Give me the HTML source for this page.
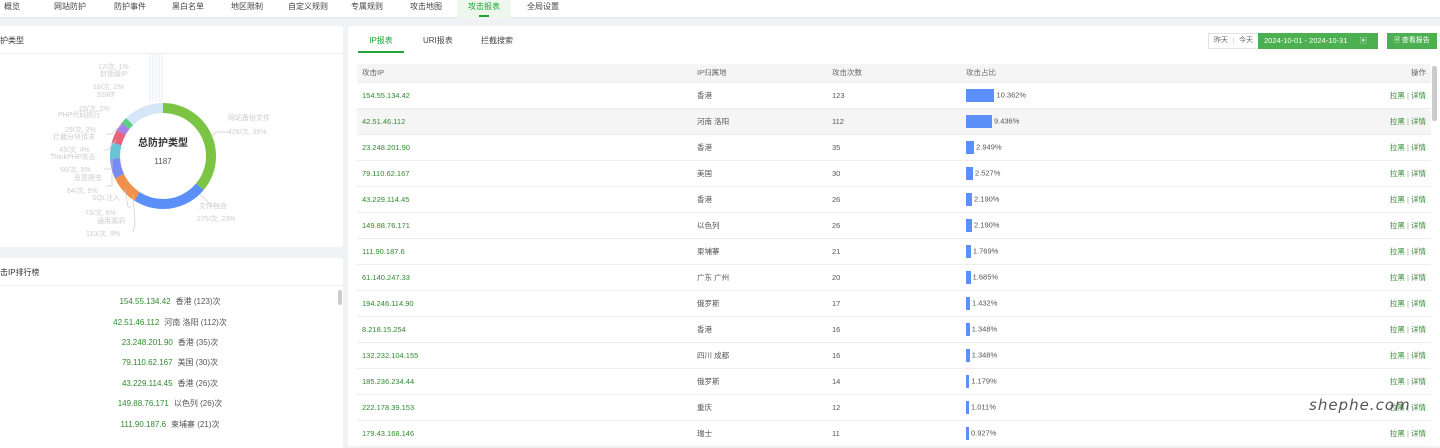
<!DOCTYPE html>
<html><head><meta charset="utf-8"><style>
*{margin:0;padding:0;box-sizing:border-box}
body{width:1440px;height:441px;overflow:hidden;background:#f0f2f5;font-family:"Liberation Sans","Noto Sans CJK SC",sans-serif;font-size:8px;color:#555;position:relative}
.nav{position:absolute;left:0;top:0;width:1440px;height:18px;background:#fff;border-bottom:1px solid #e6e6e6}
.nav span{position:absolute;top:0;line-height:14px;font-size:8px;color:#444}
.nav .act{background:#eef7ec;color:#20a53a;padding:0 11px;height:18px}
.nav .act:after{content:"";position:absolute;left:50%;margin-left:-5px;bottom:1px;width:10px;height:2px;background:#20a53a}
.card{position:absolute;background:#fff;border-radius:3px}
.t{position:absolute;font-size:8px;color:#333}
table{border-collapse:collapse;position:absolute;left:357px;top:64px;width:1074px}
td{height:26px;border-bottom:1px solid #eee;font-size:7.5px;color:#555;padding:0}
tr.h td{height:18px;background:#f5f5f5;color:#666}
tr.g td{background:#f5f5f5}
td.ip{color:#2f8a2f;padding-left:5px;width:340px}
td.loc{width:135px}td.cnt{width:134px}
td.op{text-align:right;padding-right:5px;color:#2f8a2f}
.bar{display:inline-block;height:13px;background:#5b8ff9;vertical-align:middle;margin-right:2px}
.rk{position:absolute;left:0;width:340px;text-align:center;font-size:8px;color:#555}
.rk b{font-weight:normal;color:#2f8a2f;margin-right:5px}
</style></head><body>
<div class="nav">
<span style="left:4px">概览</span><span style="left:54px">网站防护</span><span style="left:114px">防护事件</span><span style="left:172px">黑白名单</span><span style="left:231px">地区限制</span><span style="left:288px">自定义规则</span><span style="left:351px">专属规则</span><span style="left:410px">攻击地图</span><span class="act" style="left:457px">攻击报表</span><span style="left:527px">全局设置</span>
</div>
<div class="card" style="left:-4px;top:26px;width:347px;height:221px"></div>
<div class="t" style="left:0;top:35px">护类型</div>
<div style="position:absolute;left:0;top:53px;width:343px;height:1px;background:#eee"></div>
<svg style="position:absolute;left:0;top:54px" width="343" height="193">
<g fill="none" stroke-width="10" transform="rotate(-90 163 102)">
<circle cx="163" cy="102" r="48" stroke="#d5e6f8" />
<circle cx="163" cy="102" r="48" stroke="#7cc444" stroke-dasharray="108.6 400" stroke-dashoffset="0"/>
<circle cx="163" cy="102" r="48" stroke="#5b8ff9" stroke-dasharray="69.4 400" stroke-dashoffset="-108.6"/>
<circle cx="163" cy="102" r="48" stroke="#f0904a" stroke-dasharray="27.1 400" stroke-dashoffset="-178"/>
<circle cx="163" cy="102" r="48" stroke="#7b8cf0" stroke-dasharray="18.1 400" stroke-dashoffset="-205.1"/>
<circle cx="163" cy="102" r="48" stroke="#69c3d6" stroke-dasharray="15 400" stroke-dashoffset="-223.2"/>
<circle cx="163" cy="102" r="48" stroke="#e8627a" stroke-dasharray="12 400" stroke-dashoffset="-238.2"/>
<circle cx="163" cy="102" r="48" stroke="#a781e8" stroke-dasharray="8 400" stroke-dashoffset="-250.2"/>
<circle cx="163" cy="102" r="48" stroke="#5ccf84" stroke-dasharray="6 400" stroke-dashoffset="-258.2"/>
</g>
<g stroke="#dfe6f0" stroke-width="0.8" fill="none"><path d="M150 48V0M153 48V0M156 48V0M159 48V0M162 48V0"/></g>
<g stroke="#ccc" stroke-width="0.7" fill="none"><path d="M212 82L216 78H228M200 140L212 152H220M133 140L135 170L133 178M125 135L128 153H131M112 118V132H106M112 104V115H104M116 86L108 96H104M122 70L112 80H106"/></g>
<text x="163" y="92" text-anchor="middle" font-size="10" font-weight="bold" fill="#333">总防护类型</text>
<text x="163" y="110" text-anchor="middle" font-size="8" fill="#555">1187</text>
<g font-size="7" fill="#ccc">
<text x="228" y="66">网站备份文件</text><text x="228" y="80">428/次, 36%</text>
<text x="199" y="154">文件包含</text><text x="197" y="167">275/次, 23%</text>
<text x="79" y="57">23/次, 2%</text><text x="58" y="63">PHP代码执行</text>
<text x="65" y="78">29/次, 2%</text><text x="53" y="85">拦截分块请求</text>
<text x="59" y="98">43/次, 4%</text><text x="50" y="105">ThinkPHP攻击</text>
<text x="60" y="118">56/次, 5%</text><text x="74" y="126">恶意爬虫</text>
<text x="67" y="139">64/次, 5%</text><text x="92" y="146">SQL注入</text>
<text x="85" y="161">73/次, 6%</text><text x="97" y="169">通用漏洞</text>
<text x="86" y="182">110/次, 9%</text>
</g>
</svg>
<div style="position:absolute;left:98px;top:64px;font-size:7px;color:#ccc;line-height:7px">17/次, 1%<br>&nbsp;封锁级IP</div>
<div style="position:absolute;left:93px;top:84px;font-size:7px;color:#ccc;line-height:8px">18/次, 2%<br>&nbsp;&nbsp;SSRF</div>
<div class="card" style="left:-4px;top:258px;width:347px;height:190px"></div>
<div class="t" style="left:0;top:267px">击IP排行榜</div>
<div style="position:absolute;left:0;top:285px;width:343px;height:1px;background:#eee"></div>
<div style="position:absolute;left:338px;top:290px;width:4px;height:15px;background:#ccc;border-radius:2px"></div>
<div class="rk" style="top:296px"><b>154.55.134.42</b>香港 (123)次</div>
<div class="rk" style="top:317px"><b>42.51.46.112</b>河南 洛阳 (112)次</div>
<div class="rk" style="top:337px"><b>23.248.201.90</b>香港 (35)次</div>
<div class="rk" style="top:357px"><b>79.110.62.167</b>美国 (30)次</div>
<div class="rk" style="top:378px"><b>43.229.114.45</b>香港 (26)次</div>
<div class="rk" style="top:398px"><b>149.88.76.171</b>以色列 (26)次</div>
<div class="rk" style="top:419px"><b>111.90.187.6</b>柬埔寨 (21)次</div>
<div class="card" style="left:348px;top:26px;width:1096px;height:420px"></div>
<div style="position:absolute;left:358px;top:35px;width:46px;text-align:center;color:#20a53a;font-size:8px">IP报表</div>
<div style="position:absolute;left:358px;top:51px;width:46px;height:2px;background:#20a53a"></div>
<div style="position:absolute;left:423px;top:35px;color:#444;font-size:8px">URI报表</div>
<div style="position:absolute;left:481px;top:35px;color:#444;font-size:8px">拦截搜索</div>
<div style="position:absolute;left:1208px;top:33px;height:16px;border:1px solid #e2e2e2;font-size:7px;color:#666;line-height:14px;background:#fff"><span style="padding:0 5px;border-right:1px solid #e2e2e2">昨天</span><span style="padding:0 5px">今天</span></div>
<div style="position:absolute;left:1258px;top:33px;width:120px;height:16px;background:#4caf50;color:#fff;font-size:7.5px;line-height:16px;padding-left:6px">2024-10-01 - 2024-10-31 <span style="margin-left:10px;opacity:.7">▣</span></div>
<div style="position:absolute;left:1387px;top:33px;width:50px;height:16px;background:#4caf50;color:#fff;font-size:7px;line-height:16px;text-align:center">🗎 查看报告</div>
<table>
<tr class="h"><td class="ip" style="color:#666">攻击IP</td><td style="width:0"></td><td class="loc">IP归属地</td><td class="cnt">攻击次数</td><td>攻击占比</td><td class="op" style="color:#666">操作</td></tr>
</table>
<div style="position:absolute;left:1432px;top:66px;width:5px;height:55px;background:#ccc;border-radius:2px"></div>
<div style="position:absolute;left:1309px;top:396px;font-size:15px;font-style:italic;color:#555;font-family:'DejaVu Sans',sans-serif;letter-spacing:1px">shephe.com</div>
<script>
var d=[["154.55.134.42","香港",123,"10.362"],["42.51.46.112","河南 洛阳",112,"9.436"],["23.248.201.90","香港",35,"2.949"],["79.110.62.167","美国",30,"2.527"],["43.229.114.45","香港",26,"2.190"],["149.88.76.171","以色列",26,"2.190"],["111.90.187.6","柬埔寨",21,"1.769"],["61.140.247.33","广东 广州",20,"1.685"],["194.246.114.90","俄罗斯",17,"1.432"],["8.218.15.254","香港",16,"1.348"],["132.232.104.155","四川 成都",16,"1.348"],["185.236.234.44","俄罗斯",14,"1.179"],["222.178.39.153","重庆",12,"1.011"],["179.43.168.146","瑞士",11,"0.927"]];
var t=document.querySelector("table tbody")||document.querySelector("table"),h="";
d.forEach(function(r,i){var w=Math.max(3,parseFloat(r[3])*2.75);h+='<tr'+(i==1?' class="g"':'')+'><td class="ip">'+r[0]+'</td><td></td><td class="loc">'+r[1]+'</td><td class="cnt">'+r[2]+'</td><td><span class="bar" style="width:'+w+'px"></span>'+r[3]+'%</td><td class="op">拉黑 <span style="color:#999">|</span> 详情</td></tr>';});
t.insertAdjacentHTML("beforeend",h);
</script>
</body></html>
